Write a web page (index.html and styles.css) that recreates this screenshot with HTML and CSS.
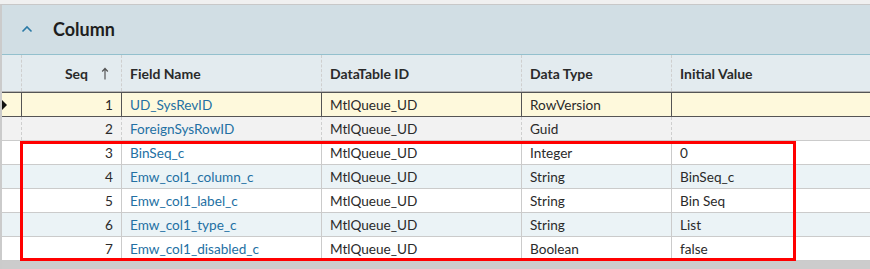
FILE: index.html
```html
<!DOCTYPE html>
<html>
<head>
<meta charset="utf-8">
<link rel="stylesheet" href="styles.css">
</head>
<body>
<div class="page">
  <div class="panel">
    <div class="panel-head">
      <svg class="chev" width="12" height="8" viewBox="0 0 12 8"><path d="M1.5 6.5 L6 2 L10.5 6.5" fill="none" stroke="#2b7aa6" stroke-width="1.6"/></svg>
      <span class="title">Column</span>
    </div>
    <div class="grid">
      <div class="row head">
        <div class="c ind"></div>
        <div class="c seq">Seq <svg class="sort" width="8" height="13" viewBox="0 0 8 13"><path d="M4 1.5 V12.5 M1.2 4.5 L4 1.5 L6.8 4.5" fill="none" stroke="#555" stroke-width="1.2"/></svg></div>
        <div class="c">Field Name</div>
        <div class="c">DataTable ID</div>
        <div class="c">Data Type</div>
        <div class="c last">Initial Value</div>
      </div>
      <div class="row sel">
        <div class="c ind"><span class="tri"></span></div>
        <div class="c seq">1</div>
        <div class="c link">UD_SysRevID</div>
        <div class="c">MtlQueue_UD</div>
        <div class="c">RowVersion</div>
        <div class="c last"></div>
      </div>
      <div class="row gray">
        <div class="c ind"></div>
        <div class="c seq">2</div>
        <div class="c link">ForeignSysRowID</div>
        <div class="c">MtlQueue_UD</div>
        <div class="c">Guid</div>
        <div class="c last"></div>
      </div>
      <div class="row">
        <div class="c ind"></div>
        <div class="c seq">3</div>
        <div class="c link">BinSeq_c</div>
        <div class="c">MtlQueue_UD</div>
        <div class="c">Integer</div>
        <div class="c last">0</div>
      </div>
      <div class="row alt">
        <div class="c ind"></div>
        <div class="c seq">4</div>
        <div class="c link">Emw_col1_column_c</div>
        <div class="c">MtlQueue_UD</div>
        <div class="c">String</div>
        <div class="c last">BinSeq_c</div>
      </div>
      <div class="row">
        <div class="c ind"></div>
        <div class="c seq">5</div>
        <div class="c link">Emw_col1_label_c</div>
        <div class="c">MtlQueue_UD</div>
        <div class="c">String</div>
        <div class="c last">Bin Seq</div>
      </div>
      <div class="row alt">
        <div class="c ind"></div>
        <div class="c seq">6</div>
        <div class="c link">Emw_col1_type_c</div>
        <div class="c">MtlQueue_UD</div>
        <div class="c">String</div>
        <div class="c last">List</div>
      </div>
      <div class="row">
        <div class="c ind"></div>
        <div class="c seq">7</div>
        <div class="c link">Emw_col1_disabled_c</div>
        <div class="c">MtlQueue_UD</div>
        <div class="c">Boolean</div>
        <div class="c last">false</div>
      </div>
      <div class="highlight"></div>
    </div>
    <div class="footer"></div>
  </div>
</div>
</body>
</html>
```
FILE: styles.css
```css
* { box-sizing: border-box; }
html, body { margin: 0; padding: 0; }
body {
  width: 870px;
  height: 269px;
  overflow: hidden;
  background: #f0f0f0;
  font-family: Lato, "Noto Sans", sans-serif;
  font-size: 13.6px;
  color: #2a2a2a;
}
.page { padding-top: 4px; }
.panel {
  border-top: 1px solid #c8c8c8;
  border-left: 2px solid #cbcbcb;
  background: #fff;
}
.panel-head {
  height: 50px;
  background: #d1dee4;
  border-bottom: 1px solid #93c0cd;
  display: flex;
  align-items: center;
  padding-left: 19px;
}
.chev { display: block; margin-top: -1px; }
.title {
  margin-left: 20px;
  font-size: 18px;
  font-weight: bold;
  color: #1e1e1e;
  margin-top: -1px;
}
.grid { position: relative; }
.row {
  display: grid;
  grid-template-columns: 20px 100px 200px 200px 150px 1fr;
  height: 24px;
  border-bottom: 1px solid #cbcbcb;
  background: #fff;
}
.row .c {
  border-right: 1px solid #cbcbcb;
  padding: 0 8px;
  display: flex;
  align-items: center;
  white-space: nowrap;
  overflow: hidden;
}
.row .c.last { border-right: none; }
.row .c.ind { padding: 0; }
.row .c.seq { justify-content: flex-end; }
.row.head {
  height: 37px;
  background: #e3ebef;
  border-bottom: 1px solid #b5b5b5;
  font-weight: bold;
  font-size: 14px;
  color: #2a2a2a;
}
.row.head .c { border-right: 1px dashed #cfcfcf; }
.row.head .c.last { border-right: none; }
.row.head .c.seq { padding-right: 12px; }
.sort { margin-left: 13px; }
.row.sel {
  height: 25px;
  background: #fef9dc;
  border-top: 1px solid #555;
  border-bottom: 1px solid #555;
}
.row.sel .c { border-right: 1px solid #555; }
.row.sel .c.last { border-right: none; }
.tri {
  display: block;
  width: 0; height: 0;
  border-top: 5px solid transparent;
  border-bottom: 5px solid transparent;
  border-left: 5px solid #111;
  margin-left: 0;
}
.row.gray { background: #f2f2f2; height: 24px; }
.row.gray .c { border-right: 1px dashed #cfcfcf; }
.row.gray .c.last { border-right: none; }
.row.alt { background: #ebf3f6; }
.link { color: #2370a3; }
.highlight {
  position: absolute;
  left: 18px;
  top: 86px;
  width: 776px;
  height: 120px;
  border: 3px solid #ff0000;
  pointer-events: none;
}
.footer { height: 10px; background: #cccccc; }
```
